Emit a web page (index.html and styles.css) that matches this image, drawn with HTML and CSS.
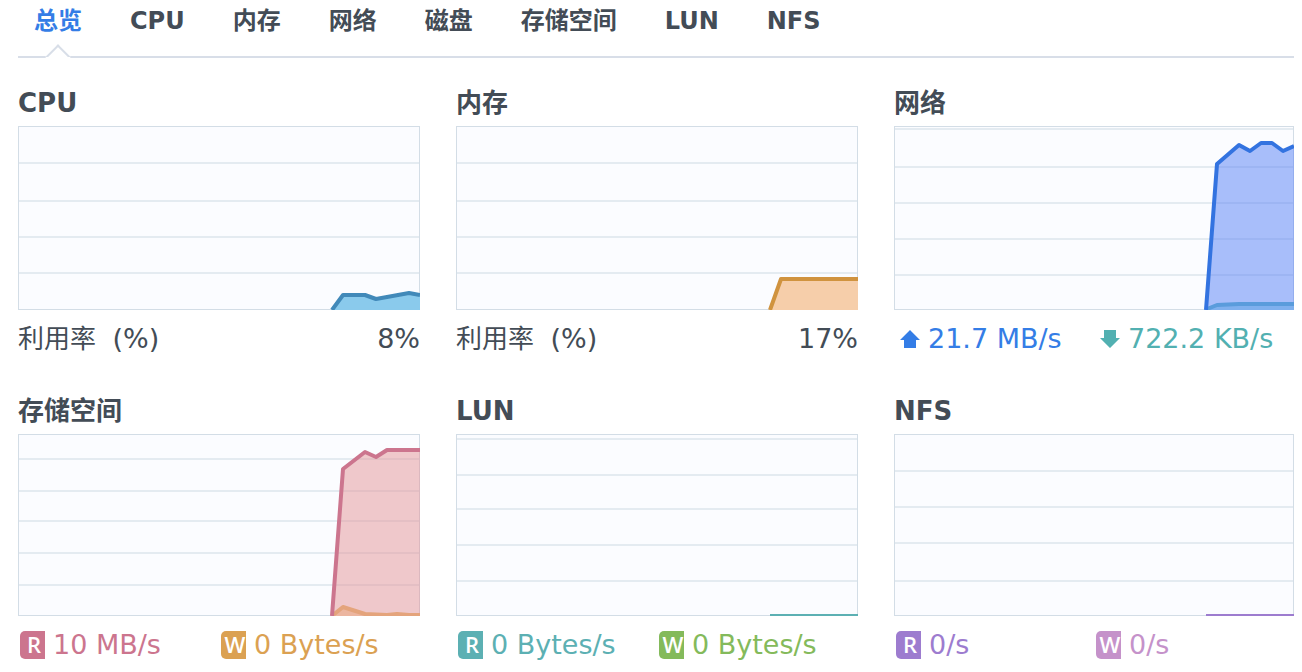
FILE: index.html
```html
<!DOCTYPE html>
<html lang="zh-CN">
<head>
<meta charset="UTF-8">
<meta name="viewport" content="width=device-width, initial-scale=1.0">
<title>总览</title>
<link rel="stylesheet" href="styles.css">
</head>
<body>
<nav class="tabs">
  <a class="tab active" href="#overview">总览</a>
  <a class="tab" href="#cpu">CPU</a>
  <a class="tab" href="#memory">内存</a>
  <a class="tab" href="#network">网络</a>
  <a class="tab" href="#disk">磁盘</a>
  <a class="tab" href="#volume">存储空间</a>
  <a class="tab" href="#lun">LUN</a>
  <a class="tab" href="#nfs">NFS</a>
</nav>

<main class="panels">
  <section class="panel">
    <h2>CPU</h2>
    <svg class="chart" viewBox="0 0 402 184" preserveAspectRatio="none">
      <path class="grid" d="M0 37H402M0 75H402M0 111H402M0 147H402"/>
      <rect class="frame" x="0.5" y="0.5" width="401" height="183"/>
      <path fill="#8acaec" d="M314 184L325 169H347L358 173L391 167L402 169V184Z"/>
      <path class="line" stroke="#4189b9" d="M314 184L325 169H347L358 173L391 167L402 169"/>
    </svg>
    <div class="usage"><span>利用率&nbsp; <span class="number">(%)</span></span><span class="number">8%</span></div>
  </section>

  <section class="panel">
    <h2>内存</h2>
    <svg class="chart" viewBox="0 0 402 184" preserveAspectRatio="none">
      <path class="grid" d="M0 37H402M0 75H402M0 111H402M0 147H402"/>
      <rect class="frame" x="0.5" y="0.5" width="401" height="183"/>
      <path fill="#f6ceaa" d="M314 184L325 153H402V184Z"/>
      <path class="line" stroke="#d0933f" d="M314 184L325 153H402"/>
    </svg>
    <div class="usage"><span>利用率&nbsp; <span class="number">(%)</span></span><span class="number">17%</span></div>
  </section>

  <section class="panel">
    <h2>网络</h2>
    <svg class="chart" viewBox="0 0 400 184" preserveAspectRatio="none">
      <path class="grid" d="M0 3H400M0 41H400M0 77H400M0 113H400M0 149H400"/>
      <rect class="frame" x="0.5" y="0.5" width="399" height="183"/>
      <path fill="#5680f5" fill-opacity="0.5" d="M312 184L323 38L345 19L356 25L367 17L378 17L389 25L400 20V184Z"/>
      <path fill="#7fb0ee" d="M313 184L323 179H400V184Z"/>
      <path class="line" stroke="#5a9cdc" d="M313 183L323 179L345 178H400"/>
      <path class="line" stroke="#3373e0" d="M312 184L323 38L345 19L356 25L367 17L378 17L389 25L400 20"/>
    </svg>
    <div class="legend">
      <div class="item upload">
        <svg class="arrow" viewBox="0 0 20 18"><path d="M10 0L20 10H16V18H4V10H0Z"/></svg>
        <span>21.7 MB/s</span>
      </div>
      <div class="item download">
        <svg class="arrow" viewBox="0 0 20 18"><path d="M10 18L20 8H16V0H4V8H0Z"/></svg>
        <span>722.2 KB/s</span>
      </div>
    </div>
  </section>

  <section class="panel">
    <h2>存储空间</h2>
    <svg class="chart short" viewBox="0 0 402 182" preserveAspectRatio="none">
      <path class="grid" d="M0 25H402M0 57H402M0 87H402M0 119H402M0 151H402"/>
      <rect class="frame" x="0.5" y="0.5" width="401" height="181"/>
      <path fill="#e39397" fill-opacity="0.5" d="M314 182L325 35L347 18L358 23L369 16H402V182Z"/>
      <path fill="#ecb6a0" d="M315 181L325 173L348 180L402 182H315Z"/>
      <path class="line" stroke="#e4a47c" d="M315 181L325 173L347 180L369 181L379 180L391 181H402"/>
      <path class="line" stroke="#cc758e" d="M314 182L325 35L347 18L358 23L369 16H402"/>
    </svg>
    <div class="legend">
      <div class="item volume-read"><b class="badge">R</b><span>10 MB/s</span></div>
      <div class="item volume-write"><b class="badge">W</b><span>0 Bytes/s</span></div>
    </div>
  </section>

  <section class="panel">
    <h2>LUN</h2>
    <svg class="chart short" viewBox="0 0 402 182" preserveAspectRatio="none">
      <path class="grid" d="M0 5H402M0 41H402M0 75H402M0 111H402M0 147H402"/>
      <rect class="frame" x="0.5" y="0.5" width="401" height="181"/>
      <path class="line" stroke="#5cb0b3" d="M314 182H402"/>
    </svg>
    <div class="legend">
      <div class="item lun-read"><b class="badge">R</b><span>0 Bytes/s</span></div>
      <div class="item lun-write"><b class="badge">W</b><span>0 Bytes/s</span></div>
    </div>
  </section>

  <section class="panel">
    <h2>NFS</h2>
    <svg class="chart short" viewBox="0 0 400 182" preserveAspectRatio="none">
      <path class="grid" d="M0 37H400M0 73H400M0 109H400M0 147H400"/>
      <rect class="frame" x="0.5" y="0.5" width="399" height="181"/>
      <path class="line" stroke="#9d7ccf" d="M312 182H400"/>
    </svg>
    <div class="legend">
      <div class="item nfs-read"><b class="badge">R</b><span>0/s</span></div>
      <div class="item nfs-write"><b class="badge">W</b><span>0/s</span></div>
    </div>
  </section>
</main>
</body>
</html>
```
FILE: styles.css
```css
*,
*::after {
  box-sizing: border-box;
}
body {
  margin: 0;
  padding: 0 8px 0 18px;
  background: #fff;
  color: #434c56;
  font-family: "DejaVu Sans", "Noto Sans CJK SC", sans-serif;
  font-size: 26px;
  line-height: 36px;
}

/* tabs */
.tabs {
  display: flex;
  gap: 48px;
  height: 58px;
  padding: 3px 16px 0;
  border-bottom: 2px solid #d8dee8;
}
.tab {
  position: relative;
  height: 55px;
  color: inherit;
  font-size: 24px;
  font-weight: bold;
  text-decoration: none;
  white-space: nowrap;
}
.tab.active {
  color: #347de6;
}
.tab.active::after {
  content: "";
  position: absolute;
  left: calc(50% - 9px);
  bottom: -8px;
  width: 18px;
  height: 18px;
  background: #fff;
  border: 2px solid #d8dee8;
  border-right-color: transparent;
  border-bottom-color: transparent;
  transform: rotate(45deg);
}

/* panels */
.panels {
  display: grid;
  grid-template-columns: 402fr 402fr 400fr;
  gap: 36px;
  padding-top: 27px;
}
.panel {
  min-width: 0;
}
h2 {
  margin: 0 0 5px;
  font-size: 26px;
  line-height: 36px;
}
.chart {
  display: block;
  width: 100%;
  height: 184px;
  background: #fbfcff;
}
.chart.short {
  height: 182px;
}
.grid {
  fill: none;
  stroke: #e4ebf1;
  stroke-width: 2;
}
.frame {
  fill: none;
  stroke: #d3dde6;
  stroke-width: 1;
}
.line {
  fill: none;
  stroke-width: 4;
  stroke-linejoin: round;
}

/* values under the charts */
.usage,
.legend {
  display: flex;
  height: 47px;
  padding-top: 11px;
  white-space: nowrap;
}
.usage {
  justify-content: space-between;
}
.number,
.legend {
  font-size: 27px;
}
.item {
  display: flex;
  align-items: center;
  width: 50%;
  padding-left: 2px;
}
.arrow {
  width: 20px;
  height: 18px;
  margin: 0 8px 0 4px;
  fill: currentColor;
}
.badge {
  width: 25px;
  height: 28px;
  margin-right: 8px;
  padding-left: 3px;
  border-radius: 5px 0 0 5px;
  color: #fff;
  font-family: "Open Sans", sans-serif;
  font-size: 22px;
  font-weight: 600;
  line-height: 26px;
  text-align: center;
}
.upload { color: #347de6; }
.download { color: #52b0b1; }
.volume-read { color: #cc758e; }
.volume-read .badge { background: #cc758e; }
.volume-write { color: #dba152; }
.volume-write .badge { background: #dba152; }
.lun-read { color: #5cb0b3; }
.lun-read .badge { background: #5cb0b3; }
.lun-write { color: #84ba5b; }
.lun-write .badge { background: #84ba5b; }
.nfs-read { color: #9d7ccf; }
.nfs-read .badge { background: #9d7ccf; }
.nfs-write { color: #c592ca; }
.nfs-write .badge { background: #c592ca; }
```
